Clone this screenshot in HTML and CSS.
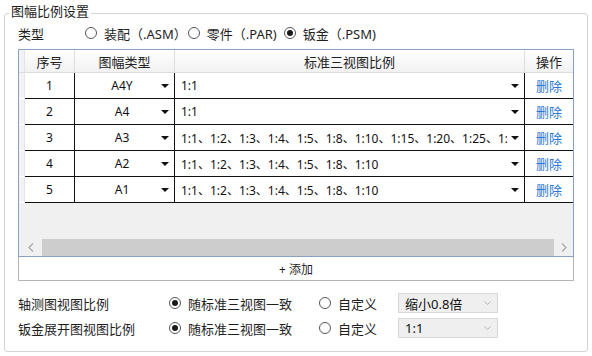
FILE: index.html
```html
<!DOCTYPE html>
<html lang="zh-CN">
<head>
    <meta charset="UTF-8">
    <title>图幅比例设置</title>
    <link rel="stylesheet" href="styles.css">
</head>
<body>
    <fieldset class="group">
        <legend>图幅比例设置</legend>

        <!-- 类型 -->
        <div class="type-row">
            <span class="type-label">类型</span>
            <label class="opt opt-asm"><span class="radio"></span>装配（.ASM）</label>
            <label class="opt opt-par"><span class="radio"></span>零件（.PAR)</label>
            <label class="opt"><span class="radio on"></span>钣金（.PSM)</label>
        </div>

        <!-- 表格 -->
        <div class="grid">
            <div class="grid-head">
                <div class="rh"></div>
                <div class="hc">序号</div>
                <div class="hc">图幅类型</div>
                <div class="hc">标准三视图比例</div>
                <div class="hc last">操作</div>
            </div>

            <div class="grid-row">
                <div class="rh"></div>
                <div class="c num">1</div>
                <div class="c combo center"><span class="val">A4Y</span><span class="tri"></span></div>
                <div class="c combo"><span class="val">1:1</span><span class="tri"></span></div>
                <div class="c del">删除</div>
            </div>
            <div class="grid-row">
                <div class="rh"></div>
                <div class="c num">2</div>
                <div class="c combo center"><span class="val">A4</span><span class="tri"></span></div>
                <div class="c combo"><span class="val">1:1</span><span class="tri"></span></div>
                <div class="c del">删除</div>
            </div>
            <div class="grid-row">
                <div class="rh"></div>
                <div class="c num">3</div>
                <div class="c combo center"><span class="val">A3</span><span class="tri"></span></div>
                <div class="c combo"><span class="val">1:1、1:2、1:3、1:4、1:5、1:8、1:10、1:15、1:20、1:25、1:50</span><span class="tri"></span></div>
                <div class="c del">删除</div>
            </div>
            <div class="grid-row">
                <div class="rh"></div>
                <div class="c num">4</div>
                <div class="c combo center"><span class="val">A2</span><span class="tri"></span></div>
                <div class="c combo"><span class="val">1:1、1:2、1:3、1:4、1:5、1:8、1:10</span><span class="tri"></span></div>
                <div class="c del">删除</div>
            </div>
            <div class="grid-row">
                <div class="rh"></div>
                <div class="c num">5</div>
                <div class="c combo center"><span class="val">A1</span><span class="tri"></span></div>
                <div class="c combo"><span class="val">1:1、1:2、1:3、1:4、1:5、1:8、1:10</span><span class="tri"></span></div>
                <div class="c del">删除</div>
            </div>

            <div class="grid-fill"></div>

            <!-- 水平滚动条 -->
            <div class="hscroll">
                <span class="arr">
                    <svg width="6" height="9" viewBox="0 0 6 9"><path d="M5 0.5 L1 4.5 L5 8.5" fill="none" stroke="#a8a8a8" stroke-width="1.2"/></svg>
                </span>
                <span class="thumb"></span>
                <span class="arr right">
                    <svg width="6" height="9" viewBox="0 0 6 9"><path d="M1 0.5 L5 4.5 L1 8.5" fill="none" stroke="#a8a8a8" stroke-width="1.2"/></svg>
                </span>
            </div>
        </div>
        <div class="add-btn">+ 添加</div>

        <!-- 其他视图比例 -->
        <div class="scale-row">
            <span class="scale-label">轴测图视图比例</span>
            <label class="opt opt-a"><span class="radio on"></span>随标准三视图一致</label>
            <label class="opt opt-b"><span class="radio"></span>自定义</label>
            <div class="select">
                <span>缩小0.8倍</span>
                <svg width="7" height="5" viewBox="0 0 7 5"><path d="M0.5 0.5 L3.5 3.5 L6.5 0.5" fill="none" stroke="#b5b5b5" stroke-width="1"/></svg>
            </div>
        </div>
        <div class="scale-row">
            <span class="scale-label">钣金展开图视图比例</span>
            <label class="opt opt-a"><span class="radio on"></span>随标准三视图一致</label>
            <label class="opt opt-b"><span class="radio"></span>自定义</label>
            <div class="select">
                <span>1:1</span>
                <svg width="7" height="5" viewBox="0 0 7 5"><path d="M0.5 0.5 L3.5 3.5 L6.5 0.5" fill="none" stroke="#b5b5b5" stroke-width="1"/></svg>
            </div>
        </div>
    </fieldset>
</body>
</html>
```

FILE: styles.css
```css
/* General */
body {
    margin: 0;
    background-color: #fff;
    font-family: "Noto Sans", "Noto Sans CJK SC", sans-serif;
    font-size: 13px;
    color: #1e1e1e;
}

.group {
    box-sizing: border-box;
    margin: 3px 4px 0 4px;
    height: 349px;
    padding: 0 13px;
    border: 1px solid #d4d4d4;
    border-radius: 3px;
    min-inline-size: 0;
}

.group legend {
    margin-left: -9px;
    padding: 0 2px 4px 2px;
    height: 20px;
    box-sizing: border-box;
    font-size: 13px;
    line-height: 16px;
    color: #1e1e1e;
}

/* Radio buttons */
.opt {
    display: flex;
    align-items: center;
    height: 20px;
    white-space: nowrap;
}

.radio {
    box-sizing: border-box;
    width: 12px;
    height: 12px;
    margin-right: 7px;
    border: 1px solid #555;
    border-radius: 50%;
    background-color: #fff;
    display: flex;
    justify-content: center;
    align-items: center;
    flex-shrink: 0;
}

.radio.on::after {
    content: "";
    width: 6px;
    height: 6px;
    border-radius: 50%;
    background-color: #1a1a1a;
}

.type-row {
    display: flex;
    align-items: center;
    height: 20px;
}

.type-label {
    width: 67px;
}

.opt-asm {
    margin-right: 1px;
}

.opt-par {
    margin-right: 7px;
}

/* Grid */
.grid {
    margin-top: 6px;
    height: 208px;
    box-sizing: border-box;
    border: 1px solid #87a2c6;
    background-color: #f0f0f0;
    display: flex;
    flex-direction: column;
    font-size: 12px;
}

.grid-head,
.grid-row {
    display: grid;
    grid-template-columns: 6px 50px 100px 350px 48px;
}

.grid-head {
    height: 23px;
    box-sizing: border-box;
    border-bottom: 1px solid #dcdcdc;
    background: linear-gradient(#ffffff, #f1f1f1);
    font-size: 13px;
}

.grid-head .rh {
    background: #f2f2f2;
    border-right: 1px solid #e4e4e4;
}

.hc {
    display: flex;
    justify-content: center;
    align-items: center;
    border-right: 1px solid #dedede;
    color: #222;
}

.hc.last {
    border-right: none;
}

.grid-row {
    height: 26px;
    background-color: #fff;
}

.grid-row .rh {
    background-color: #f3f3f3;
    border-bottom: 1px solid #fff;
    border-right: 1px solid #e4e4e4;
}

.c {
    box-sizing: border-box;
    border-bottom: 1px solid #111;
    border-right: 1px solid #111;
    display: flex;
    align-items: center;
    overflow: hidden;
    color: #111;
}

.c.num {
    justify-content: center;
}

.combo {
    padding: 0 5px 0 6px;
}

.combo .val {
    flex: 1;
    white-space: nowrap;
    overflow: hidden;
}

.combo.center .val {
    text-align: center;
    padding-left: 6px;
}

.tri {
    width: 0;
    height: 0;
    margin-left: 4px;
    border-left: 4px solid transparent;
    border-right: 4px solid transparent;
    border-top: 4px solid #111;
    flex-shrink: 0;
}

.c.del {
    border-right: none;
    justify-content: center;
    color: #2a76d4;
    font-size: 13px;
}

.grid-fill {
    flex: 1;
}

.hscroll {
    height: 17px;
    display: flex;
}

.hscroll .arr {
    width: 23px;
    display: flex;
    justify-content: center;
    align-items: center;
}

.hscroll .arr.right {
    width: 19px;
}

.hscroll .thumb {
    flex: 1;
    background-color: #cdcdcd;
}

.add-btn {
    height: 24px;
    box-sizing: border-box;
    border: 1px solid #b4b4b4;
    border-top: none;
    display: flex;
    justify-content: center;
    align-items: center;
    font-size: 12px;
    color: #1e1e1e;
}

/* Bottom options */
.scale-row {
    display: flex;
    align-items: center;
    height: 20px;
    margin-top: 5px;
}

.add-btn + .scale-row {
    margin-top: 12px;
}

.scale-label {
    width: 151px;
}

.opt-a {
    width: 150px;
}

.opt-b {
    width: 79px;
}

.select {
    box-sizing: border-box;
    width: 100px;
    height: 20px;
    padding: 0 6px;
    border: 1px solid #d9d9d9;
    background-color: #efefef;
    display: flex;
    justify-content: space-between;
    align-items: center;
    color: #111;
}
```
